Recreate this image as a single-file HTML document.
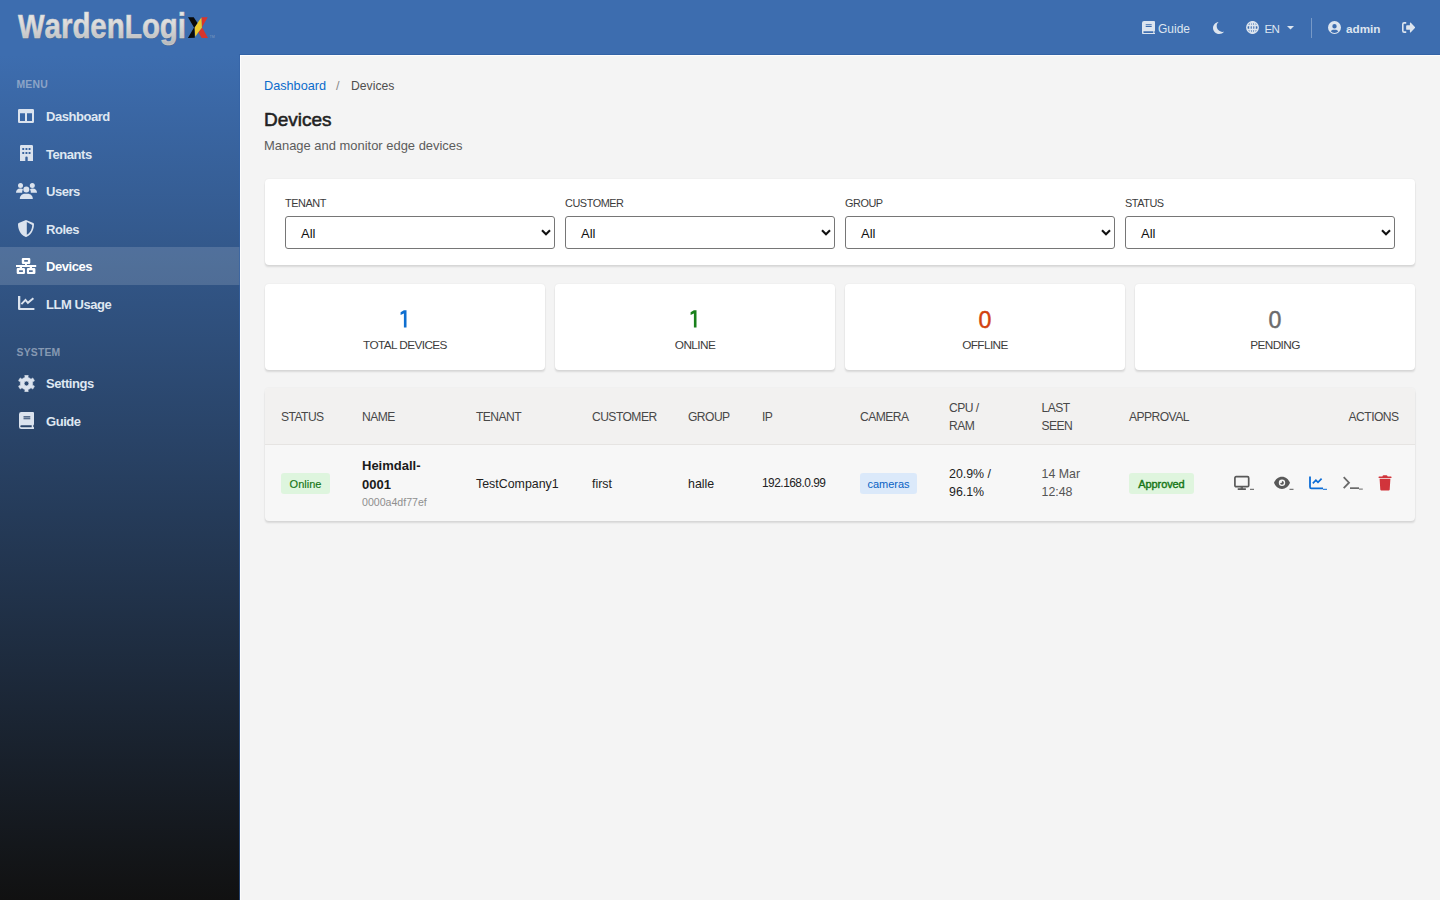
<!DOCTYPE html>
<html>
<head>
<meta charset="utf-8">
<style>
*{box-sizing:border-box;margin:0;padding:0}
html,body{width:1440px;height:900px;overflow:hidden}
body{font-family:"Liberation Sans",sans-serif;background:#f4f4f4;color:#222;position:relative}
.abs{position:absolute}
.hdt{font-size:12px;color:#dde5ef;line-height:14px}
#hdr{position:absolute;left:0;top:0;width:1440px;height:55px;background:#3d6daf}
#side{position:absolute;left:0;top:55px;width:240px;height:845px;
 background:linear-gradient(180deg,#3d6daf 0%,#111 100%)}
#main{position:absolute;left:240px;top:55px;width:1200px;height:845px;background:#f4f4f4}
.sec{position:absolute;left:16.5px;font-size:10.4px;font-weight:bold;letter-spacing:0.2px;color:rgba(195,205,220,0.6)}
.item{position:absolute;left:0;width:240px;height:38px}
.item.active{background:rgba(255,255,255,0.15)}
.item svg{position:absolute;left:17px;top:11px}
.item span{position:absolute;left:46px;top:12px;font-size:13px;font-weight:bold;letter-spacing:-0.45px;color:#dfe7f1;line-height:16px}
.item.active span{color:#fff}
.card{position:absolute;background:#fff;border-radius:4px;box-shadow:0 0 2px rgba(0,0,0,0.07),0 2.5px 2px -0.5px rgba(0,0,0,0.11)}
.flbl{position:absolute;top:18px;font-size:10.9px;color:#3c3c3c;letter-spacing:-0.45px}
.sel{position:absolute;top:37px;width:270px;height:33px;border:1px solid #767676;border-radius:3px;background:#fff}
.sel span{position:absolute;left:15px;top:9px;font-size:13px;color:#111}
.sel svg{position:absolute;right:3px;top:11.5px}
.stat{position:absolute;top:284px;width:280px;height:86px}
.stat .n{position:absolute;left:0;right:0;top:22px;text-align:center;font-size:23.2px;font-weight:normal;-webkit-text-stroke:0.45px currentColor;line-height:28px}
.stat .l{position:absolute;left:0;right:0;top:54.2px;text-align:center;font-size:11.8px;color:#3d3d3d;letter-spacing:-0.6px}
.th{position:absolute;font-size:12.1px;color:#484848;letter-spacing:-0.55px;line-height:18px}
.td{position:absolute;font-size:12.4px;color:#222;line-height:18px}
.badge{position:absolute;height:20.5px;border-radius:3px;font-size:11px;line-height:22.3px;text-align:center}
</style>
</head>
<body>
<div id="hdr">
<svg class="abs" style="left:0;top:0" width="230" height="55" viewBox="0 0 230 55">
<defs>
<linearGradient id="silver" x1="0" y1="0" x2="0" y2="1"><stop offset="0" stop-color="#eeeeee"/><stop offset="0.5" stop-color="#d9d9d9"/><stop offset="1" stop-color="#b6b8ba"/></linearGradient>
</defs>
<text x="18" y="38.3" font-family="Liberation Sans" font-weight="bold" fill="#50637a" opacity="0.5" textLength="168" lengthAdjust="spacingAndGlyphs" transform="translate(0.7 0.9)"><tspan font-size="33.5">W</tspan><tspan font-size="35">arden</tspan><tspan font-size="33.5">L</tspan><tspan font-size="35">ogi</tspan></text>
<text x="18" y="38.3" font-family="Liberation Sans" font-weight="bold" fill="url(#silver)" stroke="#d2d2d2" stroke-width="0.6" textLength="168" lengthAdjust="spacingAndGlyphs"><tspan font-size="33.5">W</tspan><tspan font-size="35">arden</tspan><tspan font-size="33.5">L</tspan><tspan font-size="35">ogi</tspan></text>
<path d="M201.5 17.2H207.7L202 27.2 208 38.1H201.7L198.3 32.3 201.9 27.8z" fill="#d8352c"/>
<path d="M201.4 17.4L201.9 27.8 198.3 32.3 195.3 36.7 194.3 27.8 197.5 23z" fill="#ecc92e"/>
<path d="M188 17.2H193.7L197.5 23 194.5 27.5 194.8 37.8 187.9 38.1 194 27.5z" fill="#0a0a0a"/>
<text x="209.5" y="37.6" font-family="Liberation Sans" font-size="3.6" fill="#8ea4c4" opacity="0.8">TM</text>
</svg>
<svg class="abs" style="left:1142px;top:21px" width="13" height="13" viewBox="0 0 13 13" fill="#dde5ef"><path fill-rule="evenodd" d="M2 0h10a1 1 0 0 1 1 1v8.6c0 .4-.2.7-.6.8v1.5a.8.8 0 0 1 0 1.6H2a2 2 0 0 1-2-2V2a2 2 0 0 1 2-2zM2 10.3a.8.8 0 0 0 0 1.6h9.3v-1.6zM3.7 3.2v1h6v-1zM3.7 5v1h6V5z"/></svg>
<div class="abs hdt" style="left:1158px;top:22px">Guide</div>
<svg class="abs" style="left:1213px;top:21.5px" width="11" height="12" viewBox="0 0 11 12" fill="#dde5ef"><path d="M6.2 0C2.8 0 0 2.7 0 6s2.8 6 6.2 6c1.9 0 3.6-.8 4.8-2.2-.5.1-.9.1-1.4.1C6.3 9.900 3.7 7.300 3.7 4.100c0-1.600.7-3.100 1.900-4.000z"/></svg>
<svg class="abs" style="left:1246px;top:21px" width="13" height="13" viewBox="0 0 13 13" fill="none" stroke="#dde5ef" stroke-width="1.5"><circle cx="6.5" cy="6.5" r="5.7"/><ellipse cx="6.5" cy="6.5" rx="2.6" ry="5.7"/><path d="M1 4.5h11M1 8.5h11M6.5 1v11"/></svg>
<div class="abs hdt" style="left:1264.5px;top:22px;font-size:11.6px;letter-spacing:-0.7px">EN</div>
<svg class="abs" style="left:1287px;top:26px" width="7" height="4" viewBox="0 0 7 4" fill="#dde5ef"><path d="M0 0h7L3.5 3.6z"/></svg>
<div class="abs" style="left:1311px;top:18px;width:1px;height:20px;background:rgba(255,255,255,0.3)"></div>
<svg class="abs" style="left:1327.5px;top:21px" width="13" height="13" viewBox="0 0 13 13" fill="#dde5ef"><path fill-rule="evenodd" d="M6.5 0a6.5 6.5 0 1 1 0 13 6.5 6.5 0 0 1 0-13zM6.5 3a2.200 2.200 0 1 0 0 4.400 2.200 2.200 0 0 0 0-4.400zM2.700 10.300A4.900 4.900 0 0 0 6.500 12c1.500 0 2.900-.7 3.800-1.700C9.800 9.300 8.500 8.700 7.300 8.700H5.700c-1.300 0-2.500.6-3 1.600z"/></svg>
<div class="abs hdt" style="left:1346px;top:22px;font-weight:bold;font-size:11.7px">admin</div>
<svg class="abs" style="left:1401.5px;top:22px" width="13.2" height="11" viewBox="0 0 14 11" preserveAspectRatio="none" fill="#dde5ef"><path d="M4.5 0H2.3A2.3 2.3 0 0 0 0 2.300v6.400A2.300 2.300 0 0 0 2.300 11H4.500V9.300H2.300a.6.6 0 0 1-.6-.6V2.300a.6.6 0 0 1 .6-.6H4.500z"/><path d="M13.700 5l-4.300-4.300c-.4-.4-1-.1-1 .4V3.200H5.300c-.5 0-.9.400-.9.900v2.800c0 .5.400.9.900.9H8.400v2.100c0 .5.600.8 1 .4L13.700 6c.3-.3.3-.7 0-1z"/></svg>
</div>
<div id="side">
</div>
<div class="sec" style="top:79px">MENU</div>
<div class="item" style="top:97px"><svg width="16" height="14" viewBox="0 0 16 14" style="left:18px;top:12px" fill="#dbe3ee"><path fill-rule="evenodd" d="M1.3 0h13.4a1.3 1.3 0 0 1 1.3 1.3v11.4a1.3 1.3 0 0 1-1.3 1.3H1.3A1.3 1.3 0 0 1 0 12.7V1.3A1.3 1.3 0 0 1 1.3 0zM2 4.2v7.8h5V4.2zM9 4.2v7.8h5V4.2z"/></svg><span>Dashboard</span></div>
<div class="item" style="top:134.5px"><svg width="13" height="16" viewBox="0 0 13 16" style="left:19.7px;top:10.5px" fill="#dbe3ee"><path fill-rule="evenodd" d="M1.2 0h10.6A1.2 1.2 0 0 1 13 1.2V16H7.7v-3.4a1.2 1.2 0 0 0-2.4 0V16H0V1.2A1.2 1.2 0 0 1 1.2 0zM2.3 3.1v1.9h1.9V3.1zM5.5 3.1v1.9h1.9V3.1zM8.6 3.1v1.9h1.9V3.1zM2.3 7v1.9h1.9V7zM5.5 7v1.9h1.9V7zM8.6 7v1.9h1.9V7z"/></svg><span>Tenants</span></div>
<div class="item" style="top:172px"><svg width="21" height="16" viewBox="0 0 21 16" style="left:16px;top:11px" fill="#dbe3ee"><circle cx="4.5" cy="2.5" r="2.5"/><circle cx="16.3" cy="2.5" r="2.5"/><circle cx="10.3" cy="6.6" r="3"/><path d="M0 9.8C0 7.3 1.6 5.6 4.2 5.6c1.3 0 2.2.4 2.8 1A4.3 4.3 0 0 0 6.2 9.8z"/><path d="M21 9.8c0-2.5-1.6-4.2-4.2-4.2-1.3 0-2.2.4-2.8 1a4.3 4.3 0 0 1 .8 3.2z"/><path d="M3.8 16c0-3 2.2-5.2 5-5.2h3c2.8 0 5 2.2 5 5.2z"/></svg><span>Users</span></div>
<div class="item" style="top:209.5px"><svg width="16" height="17" viewBox="0 0 16 17" style="left:18px;top:10px" fill="#dbe3ee"><path fill-rule="evenodd" d="M8 0l7.3 3.1C15.7 3.3 16 3.7 16 4.2c0 4.6-1.9 10.1-7.3 12.6a1.6 1.6 0 0 1-1.4 0C1.9 14.3 0 8.8 0 4.2c0-.5.3-.9.7-1.1zM8.8 2.1v12.6c3.7-1.9 5.3-5.6 5.4-9.7z"/></svg><span>Roles</span></div>
<div class="item active" style="top:247px"><svg width="21" height="18" viewBox="0 0 21 18" style="left:16px;top:10px" fill="#ffffff"><path fill-rule="evenodd" d="M7 0.9h6.1a1.2 1.2 0 0 1 1.2 1.2v3.6a1.2 1.2 0 0 1-1.2 1.2H10.9v1H20.2v2.1H16v0.9h2.2a1.2 1.2 0 0 1 1.2 1.2v3.6a1.2 1.2 0 0 1-1.2 1.2H12.1a1.2 1.2 0 0 1-1.2-1.2v-3.6a1.2 1.2 0 0 1 1.2-1.2H13.7V10H6v0.9H7.8a1.2 1.2 0 0 1 1.2 1.2v3.6a1.2 1.2 0 0 1-1.2 1.2H1.9a1.2 1.2 0 0 1-1.2-1.2v-3.6a1.2 1.2 0 0 1 1.2-1.2H3.7V10H-0.1V7.9H9V6.9H7a1.2 1.2 0 0 1-1.2-1.2V2.1A1.2 1.2 0 0 1 7 0.9zM8.2 3.1v1.7h3.7V3.1zM3.1 13.2v1.7h3.8v-1.7zM13 13.2v1.7h3.7v-1.7z"/></svg><span>Devices</span></div>
<div class="item" style="top:284.5px"><svg width="17" height="15" viewBox="0 0 17 15" style="left:18px;top:11.5px" fill="#dbe3ee"><path d="M0 0h2.3v12h14.1v1.9H1.2A1.2 1.2 0 0 1 0 12.7z"/><path d="M3.4 8.1L7.5 3.9 9.9 6.8 15.4 2.2" fill="none" stroke="#dbe3ee" stroke-width="1.9"/></svg><span>LLM Usage</span></div>
<div class="sec" style="top:346.5px">SYSTEM</div>
<div class="item" style="top:364px"><svg width="17" height="17" viewBox="0 0 17 17" style="left:17.5px;top:10.5px" fill="#dbe3ee"><path fill-rule="evenodd" stroke="#dbe3ee" stroke-width="0.6" stroke-linejoin="round" d="M14.70 8.50 L14.70 8.39 L14.70 8.28 L14.69 8.18 L14.68 8.07 L14.68 7.96 L14.67 7.85 L14.65 7.74 L14.64 7.64 L14.62 7.53 L14.61 7.42 L14.59 7.32 L14.56 7.21 L14.54 7.11 L14.52 7.00 L14.49 6.90 L14.46 6.79 L14.43 6.69 L16.39 5.94 L16.35 5.80 L16.30 5.66 L16.25 5.53 L16.20 5.39 L16.14 5.26 L16.08 5.12 L16.02 4.99 L15.96 4.86 L15.90 4.73 L15.83 4.60 L15.76 4.48 L15.69 4.35 L15.61 4.23 L15.54 4.10 L15.46 3.98 L15.38 3.86 L15.30 3.74 L15.21 3.62 L15.13 3.50 L15.04 3.39 L14.95 3.28 L14.86 3.16 L14.76 3.05 L14.67 2.95 L13.03 4.27 L12.96 4.19 L12.88 4.12 L12.81 4.04 L12.73 3.97 L12.65 3.89 L12.57 3.82 L12.49 3.75 L12.40 3.68 L12.32 3.61 L12.23 3.55 L12.14 3.48 L12.06 3.42 L11.97 3.36 L11.88 3.30 L11.79 3.24 L11.69 3.19 L11.60 3.13 L11.51 3.08 L11.41 3.03 L11.31 2.98 L11.22 2.93 L11.12 2.88 L11.02 2.84 L10.92 2.79 L10.82 2.75 L10.72 2.71 L10.62 2.67 L10.52 2.64 L10.42 2.60 L10.31 2.57 L10.21 2.54 L10.10 2.51 L10.00 2.48 L9.89 2.46 L10.23 0.38 L10.08 0.35 L9.94 0.33 L9.80 0.30 L9.66 0.28 L9.51 0.26 L9.37 0.25 L9.22 0.23 L9.08 0.22 L8.93 0.21 L8.79 0.21 L8.64 0.20 L8.50 0.20 L8.36 0.20 L8.21 0.21 L8.07 0.21 L7.92 0.22 L7.78 0.23 L7.63 0.25 L7.49 0.26 L7.34 0.28 L7.20 0.30 L7.06 0.33 L6.92 0.35 L6.77 0.38 L7.11 2.46 L7.00 2.48 L6.90 2.51 L6.79 2.54 L6.69 2.57 L6.58 2.60 L6.48 2.64 L6.38 2.67 L6.28 2.71 L6.18 2.75 L6.08 2.79 L5.98 2.84 L5.88 2.88 L5.78 2.93 L5.69 2.98 L5.59 3.03 L5.49 3.08 L5.40 3.13 L5.31 3.19 L5.21 3.24 L5.12 3.30 L5.03 3.36 L4.94 3.42 L4.86 3.48 L4.77 3.55 L4.68 3.61 L4.60 3.68 L4.51 3.75 L4.43 3.82 L4.35 3.89 L4.27 3.97 L4.19 4.04 L4.12 4.12 L4.04 4.19 L3.97 4.27 L2.33 2.95 L2.24 3.05 L2.14 3.16 L2.05 3.28 L1.96 3.39 L1.87 3.50 L1.79 3.62 L1.70 3.74 L1.62 3.86 L1.54 3.98 L1.46 4.10 L1.39 4.23 L1.31 4.35 L1.24 4.48 L1.17 4.60 L1.10 4.73 L1.04 4.86 L0.98 4.99 L0.92 5.12 L0.86 5.26 L0.80 5.39 L0.75 5.53 L0.70 5.66 L0.65 5.80 L0.61 5.94 L2.57 6.69 L2.54 6.79 L2.51 6.90 L2.48 7.00 L2.46 7.11 L2.44 7.21 L2.41 7.32 L2.39 7.42 L2.38 7.53 L2.36 7.64 L2.35 7.74 L2.33 7.85 L2.32 7.96 L2.32 8.07 L2.31 8.18 L2.30 8.28 L2.30 8.39 L2.30 8.50 L2.30 8.61 L2.30 8.72 L2.31 8.82 L2.32 8.93 L2.32 9.04 L2.33 9.15 L2.35 9.26 L2.36 9.36 L2.38 9.47 L2.39 9.58 L2.41 9.68 L2.44 9.79 L2.46 9.89 L2.48 10.00 L2.51 10.10 L2.54 10.21 L2.57 10.31 L0.61 11.06 L0.65 11.20 L0.70 11.34 L0.75 11.47 L0.80 11.61 L0.86 11.74 L0.92 11.88 L0.98 12.01 L1.04 12.14 L1.10 12.27 L1.17 12.40 L1.24 12.52 L1.31 12.65 L1.39 12.77 L1.46 12.90 L1.54 13.02 L1.62 13.14 L1.70 13.26 L1.79 13.38 L1.87 13.50 L1.96 13.61 L2.05 13.72 L2.14 13.84 L2.24 13.95 L2.33 14.05 L3.97 12.73 L4.04 12.81 L4.12 12.88 L4.19 12.96 L4.27 13.03 L4.35 13.11 L4.43 13.18 L4.51 13.25 L4.60 13.32 L4.68 13.39 L4.77 13.45 L4.86 13.52 L4.94 13.58 L5.03 13.64 L5.12 13.70 L5.21 13.76 L5.31 13.81 L5.40 13.87 L5.49 13.92 L5.59 13.97 L5.69 14.02 L5.78 14.07 L5.88 14.12 L5.98 14.16 L6.08 14.21 L6.18 14.25 L6.28 14.29 L6.38 14.33 L6.48 14.36 L6.58 14.40 L6.69 14.43 L6.79 14.46 L6.90 14.49 L7.00 14.52 L7.11 14.54 L6.77 16.62 L6.92 16.65 L7.06 16.67 L7.20 16.70 L7.34 16.72 L7.49 16.74 L7.63 16.75 L7.78 16.77 L7.92 16.78 L8.07 16.79 L8.21 16.79 L8.36 16.80 L8.50 16.80 L8.64 16.80 L8.79 16.79 L8.93 16.79 L9.08 16.78 L9.22 16.77 L9.37 16.75 L9.51 16.74 L9.66 16.72 L9.80 16.70 L9.94 16.67 L10.08 16.65 L10.23 16.62 L9.89 14.54 L10.00 14.52 L10.10 14.49 L10.21 14.46 L10.31 14.43 L10.42 14.40 L10.52 14.36 L10.62 14.33 L10.72 14.29 L10.82 14.25 L10.92 14.21 L11.02 14.16 L11.12 14.12 L11.22 14.07 L11.31 14.02 L11.41 13.97 L11.51 13.92 L11.60 13.87 L11.69 13.81 L11.79 13.76 L11.88 13.70 L11.97 13.64 L12.06 13.58 L12.14 13.52 L12.23 13.45 L12.32 13.39 L12.40 13.32 L12.49 13.25 L12.57 13.18 L12.65 13.11 L12.73 13.03 L12.81 12.96 L12.88 12.88 L12.96 12.81 L13.03 12.73 L14.67 14.05 L14.76 13.95 L14.86 13.84 L14.95 13.72 L15.04 13.61 L15.13 13.50 L15.21 13.38 L15.30 13.26 L15.38 13.14 L15.46 13.02 L15.54 12.90 L15.61 12.77 L15.69 12.65 L15.76 12.52 L15.83 12.40 L15.90 12.27 L15.96 12.14 L16.02 12.01 L16.08 11.88 L16.14 11.74 L16.20 11.61 L16.25 11.47 L16.30 11.34 L16.35 11.20 L16.39 11.06 L14.43 10.31 L14.46 10.21 L14.49 10.10 L14.52 10.00 L14.54 9.89 L14.56 9.79 L14.59 9.68 L14.61 9.58 L14.62 9.47 L14.64 9.36 L14.65 9.26 L14.67 9.15 L14.68 9.04 L14.68 8.93 L14.69 8.82 L14.70 8.72 L14.70 8.61Z M10.90 8.50 A2.4 2.4 0 1 0 6.10 8.50 A2.4 2.4 0 1 0 10.90 8.50Z"/></svg><span>Settings</span></div>
<div class="item" style="top:402px"><svg width="15" height="17" viewBox="0 0 15 17" style="left:19px;top:9.7px" fill="#dbe3ee"><path fill-rule="evenodd" d="M2.3 0H14a1 1 0 0 1 1 1v11.3c0 .5-.3.8-.7 1V15a1 1 0 0 1 0 2H2.3A2.3 2.3 0 0 1 0 14.7V2.3A2.3 2.3 0 0 1 2.3 0zM2.3 13.2a1 1 0 0 0 0 2H12.7v-2zM4.5 4.3v1.1h6.8V4.3zM4.5 6.2v1.1h6.8V6.2z"/></svg><span>Guide</span></div>

<div id="main"></div>
<div class="abs" style="left:239px;top:54px;width:1201px;height:1px;background:#3363a6"></div>
<div class="abs" style="left:239px;top:54px;width:1px;height:846px;background:#3363a6;opacity:0.6"></div>
<div class="abs" style="left:240px;top:55px;width:1200px;height:1px;background:#fdfdfd"></div>
<div class="abs" style="left:240px;top:55px;width:1px;height:845px;background:#fdfdfd"></div>

<div class="abs" style="left:264px;top:78.7px;font-size:12.7px;line-height:15px;color:#0b6bcb">Dashboard</div>
<div class="abs" style="left:336px;top:78.7px;font-size:12.7px;line-height:15px;color:#8a8a8a">/</div>
<div class="abs" style="left:351px;top:78.7px;font-size:12.2px;line-height:15px;color:#4f4f4f">Devices</div>
<div class="abs" style="left:264px;top:109.2px;font-size:19px;line-height:22px;font-weight:normal;-webkit-text-stroke:0.55px #222;color:#222">Devices</div>
<div class="abs" style="left:264px;top:138px;font-size:12.95px;line-height:16px;color:#5c5c5c">Manage and monitor edge devices</div>

<div class="card" style="left:265px;top:179px;width:1150px;height:86px">
<div class="flbl" style="left:20px">TENANT</div>
<div class="sel" style="left:20px"><span>All</span><svg width="10" height="7" viewBox="0 0 10 7"><path d="M1 1.2l4 4 4-4" fill="none" stroke="#111" stroke-width="2.1"/></svg></div>
<div class="flbl" style="left:300px">CUSTOMER</div>
<div class="sel" style="left:300px"><span>All</span><svg width="10" height="7" viewBox="0 0 10 7"><path d="M1 1.2l4 4 4-4" fill="none" stroke="#111" stroke-width="2.1"/></svg></div>
<div class="flbl" style="left:580px">GROUP</div>
<div class="sel" style="left:580px"><span>All</span><svg width="10" height="7" viewBox="0 0 10 7"><path d="M1 1.2l4 4 4-4" fill="none" stroke="#111" stroke-width="2.1"/></svg></div>
<div class="flbl" style="left:860px">STATUS</div>
<div class="sel" style="left:860px"><span>All</span><svg width="10" height="7" viewBox="0 0 10 7"><path d="M1 1.2l4 4 4-4" fill="none" stroke="#111" stroke-width="2.1"/></svg></div>
</div>

<div class="card stat" style="left:265px"><div class="n" style="color:#0f6fd0;top:22px;height:28px"><svg width="12" height="18" viewBox="0 0 12 18" style="position:absolute;left:131px;top:4.4px"><path d="M7.9 0.3h2.6v17.2H7.9V3.6L4.6 4.9V2.300z" fill="#0f6fd0"/></svg></div><div class="l">TOTAL DEVICES</div></div>
<div class="card stat" style="left:555px"><div class="n" style="color:#19801b;top:22px;height:28px"><svg width="12" height="18" viewBox="0 0 12 18" style="position:absolute;left:131px;top:4.4px"><path d="M7.9 0.3h2.6v17.2H7.9V3.6L4.6 4.9V2.300z" fill="#19801b"/></svg></div><div class="l">ONLINE</div></div>
<div class="card stat" style="left:845px"><div class="n" style="color:#d2420e">0</div><div class="l">OFFLINE</div></div>
<div class="card stat" style="left:1135px"><div class="n" style="color:#6b6b6b">0</div><div class="l">PENDING</div></div>

<div class="card" style="left:265px;top:387.5px;width:1150px;height:133px;overflow:hidden;background:#f7f7f7">
<div class="abs" style="left:0;top:0;width:1150px;height:57px;background:#f2f1f0;border-bottom:1px solid #e6e4e2"></div>
</div>
<div class="th" style="left:281px;top:407.8px">STATUS</div>
<div class="th" style="left:362px;top:407.8px">NAME</div>
<div class="th" style="left:476px;top:407.8px">TENANT</div>
<div class="th" style="left:592px;top:407.8px">CUSTOMER</div>
<div class="th" style="left:688px;top:407.8px">GROUP</div>
<div class="th" style="left:762px;top:407.8px">IP</div>
<div class="th" style="left:860px;top:407.8px">CAMERA</div>
<div class="th" style="left:949px;top:399.2px">CPU /<br>RAM</div>
<div class="th" style="left:1041.5px;top:399.2px">LAST<br>SEEN</div>
<div class="th" style="left:1129px;top:407.8px">APPROVAL</div>
<div class="th" style="left:1300px;top:407.8px;width:98.5px;text-align:right">ACTIONS</div>

<div class="badge" style="left:281px;top:473px;width:49px;background:#def5de;color:#167516;-webkit-text-stroke:0.15px #167516">Online</div>
<div class="td" style="left:362px;top:456.2px;font-size:13px;font-weight:bold;color:#1b1b1b;line-height:19px">Heimdall-<br>0001</div>
<div class="td" style="left:362px;top:494px;font-size:10.6px;color:#8f8f8f;line-height:16px">0000a4df77ef</div>
<div class="td" style="left:476px;top:475px">TestCompany1</div>
<div class="td" style="left:592px;top:475px">first</div>
<div class="td" style="left:688px;top:475px">halle</div>
<div class="td" style="left:762px;top:474.2px;font-size:11.9px;letter-spacing:-0.5px">192.168.0.99</div>
<div class="badge" style="left:860px;top:473px;width:57px;background:#dbe9fa;color:#0a62c4">cameras</div>
<div class="td" style="left:949px;top:464.6px">20.9% /<br>96.1%</div>
<div class="td" style="left:1041.5px;top:464.6px;color:#555">14 Mar<br>12:48</div>
<div class="badge" style="left:1129px;top:473px;width:65px;background:#dff5de;color:#167516;font-weight:normal;-webkit-text-stroke:0.4px #167516;letter-spacing:-0.1px">Approved</div>


<svg class="abs" style="left:1233px;top:475px" width="22" height="16" viewBox="0 0 22 16"><rect x="1.9" y="1.7" width="13.8" height="10" rx="1.2" fill="none" stroke="#595959" stroke-width="1.7"/><path d="M7.6 12.2h2.4v1.6h-2.4z" fill="#595959"/><rect x="4.6" y="13.2" width="8.4" height="1.7" rx=".6" fill="#595959"/><rect x="17" y="13.8" width="4" height="1" fill="#595959"/></svg>
<svg class="abs" style="left:1273px;top:475px" width="22" height="16" viewBox="0 0 22 16"><path fill-rule="evenodd" d="M9 1.7c3.700 0 6.600 2.500 8 6.100-1.400 3.600-4.300 6.100-8 6.100S2.400 11.400 1 7.800C2.400 4.200 5.300 1.700 9 1.700zM9 4.600a3.200 3.200 0 1 0 0 6.400 3.200 3.200 0 0 0 0-6.400z" fill="#595959"/><path d="M9 5.900a1.900 1.900 0 1 1-1.900 1.900c.2.1.500.2.800.2a1.100 1.100 0 0 0 1.100-1.100c0-.3-.1-.6-.2-.8z" fill="#595959"/><rect x="16.5" y="13.8" width="4" height="1" fill="#595959"/></svg>
<svg class="abs" style="left:1309px;top:475px" width="20" height="16" viewBox="0 0 20 16"><path d="M1 1.500v10.600c0 .8.500 1.300 1.300 1.300H14" fill="none" stroke="#0d6dd6" stroke-width="1.800"/><path d="M3.800 8.300l3.100-3.100 2.100 2.100 3.600-3.600" fill="none" stroke="#0d6dd6" stroke-width="1.700" stroke-linejoin="miter"/><rect x="14" y="13.800" width="4" height="1" fill="#0d6dd6"/></svg>
<svg class="abs" style="left:1342px;top:475px" width="22" height="16" viewBox="0 0 22 16"><path d="M1.700 2.200l5.300 5.500-5.300 5.500" fill="none" stroke="#6a6a6a" stroke-width="1.800"/><rect x="8" y="12.300" width="9" height="1.700" fill="#6a6a6a"/><rect x="17" y="13.600" width="3.800" height="1" fill="#6a6a6a"/></svg>
<svg class="abs" style="left:1378px;top:475px" width="14" height="16" viewBox="0 0 14 16"><path d="M4.600.9c.1-.4.500-.6.900-.6h3c.4 0 .8.200.9.600l.3.6h3.200c.4 0 .7.300.7.700v.3c0 .3-.2.500-.5.500H1c-.3 0-.5-.2-.5-.5v-.3c0-.4.300-.7.700-.7h3.200z" fill="#d1343b"/><path d="M1.600 3.800h10.800l-.7 10.600c0 .7-.6 1.200-1.300 1.200H3.600c-.7 0-1.200-.5-1.300-1.200z" fill="#d1343b"/></svg>
</body>
</html>
